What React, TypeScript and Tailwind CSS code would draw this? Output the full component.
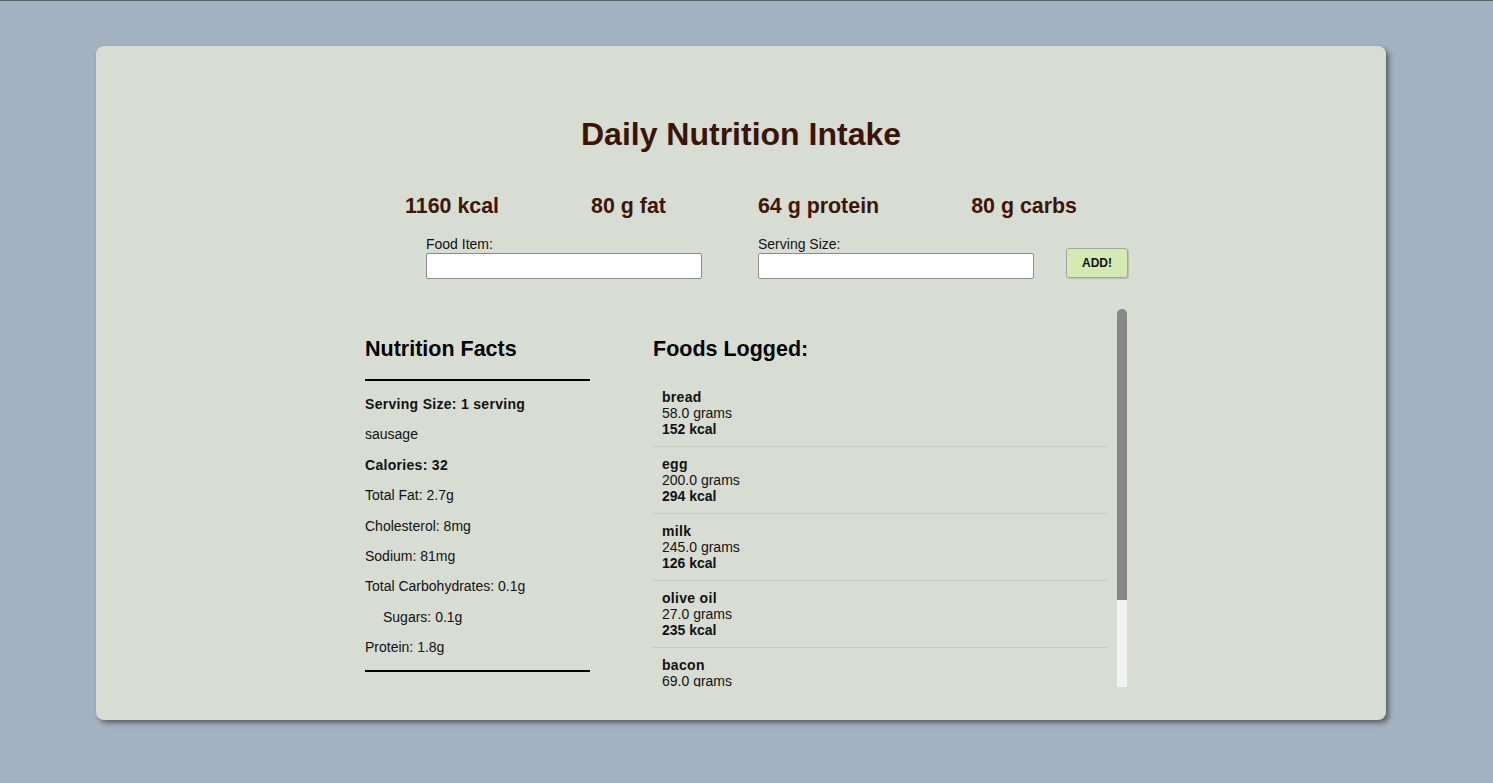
import React from "react";

const foods = [
  { name: "bread", grams: "58.0 grams", kcal: "152 kcal" },
  { name: "egg", grams: "200.0 grams", kcal: "294 kcal" },
  { name: "milk", grams: "245.0 grams", kcal: "126 kcal" },
  { name: "olive oil", grams: "27.0 grams", kcal: "235 kcal" },
  { name: "bacon", grams: "69.0 grams", kcal: "353 kcal" },
];

export default function App() {
  return (
    <div
      className="min-h-[783px] bg-[#a2b2c3] border-t border-[#5f5f5f] pt-[45px]"
      style={{ fontFamily: '"Liberation Sans", Arial, sans-serif' }}
    >
      <div className="ml-[96px] w-[1290px] h-[674px] bg-[#d8ddd3] rounded-[8px] shadow-[3px_3px_5px_rgba(70,70,70,0.75)] pt-[70px]">
        <h1 className="text-center text-[32px] leading-[37px] font-bold text-[#3b1402]">
          Daily Nutrition Intake
        </h1>

        <div className="mt-[41px] flex justify-center gap-[92px] text-[21.4px] leading-[24px] font-bold text-[#3f1503]">
          <span>1160 kcal</span>
          <span>80 g fat</span>
          <span>64 g protein</span>
          <span>80 g carbs</span>
        </div>

        <div className="mt-[18px] pl-[330px] flex items-end">
          <div className="flex flex-col w-[276px]">
            <label className="text-[14px] leading-[17px] text-[#111]">Food Item:</label>
            <input className="h-[26px] bg-white border border-[#8a8a8a] rounded-[2px]" />
          </div>
          <div className="flex flex-col w-[276px] ml-[56px]">
            <label className="text-[14px] leading-[17px] text-[#111]">Serving Size:</label>
            <input className="h-[26px] bg-white border border-[#8a8a8a] rounded-[2px]" />
          </div>
          <button className="ml-[32px] mb-[1px] w-[62px] h-[30px] bg-[#d4eab2] border border-[#a3a89d] rounded-[3px] text-[12px] font-bold text-[#111] shadow-[1px_1px_1px_rgba(0,0,0,0.15)]">
            ADD!
          </button>
        </div>

        <div className="mt-[30px] pl-[269px] flex">
          <div className="w-[225px] pt-[27.5px] text-[#111]">
            <h2 className="text-[21.5px] leading-[25px] font-bold text-black">Nutrition Facts</h2>
            <div className="mt-[17.5px] h-[2px] bg-black" />
            <div className="mt-[15px] flex flex-col gap-[14.4px] text-[14px] leading-[16px]">
              <p className="font-bold tracking-[0.3px]">Serving Size: 1 serving</p>
              <p>sausage</p>
              <p className="font-bold tracking-[0.3px]">Calories: 32</p>
              <p>Total Fat: 2.7g</p>
              <p>Cholesterol: 8mg</p>
              <p>Sodium: 81mg</p>
              <p>Total Carbohydrates: 0.1g</p>
              <p className="pl-[18px]">Sugars: 0.1g</p>
              <p>Protein: 1.8g</p>
            </div>
            <div className="mt-[14.5px] h-[2px] bg-black" />
          </div>

          <div className="ml-[63px] w-[474px] h-[378px] flex">
            <div className="w-[464px] h-full overflow-hidden">
              <div className="pr-[9px] pt-[27.5px]">
                <h2 className="text-[21.5px] leading-[25px] font-bold text-black">Foods Logged:</h2>
                <ul className="mt-[18.5px]">
                  {foods.map((f) => (
                    <li
                      key={f.name}
                      className="pl-[9px] pt-[9px] pb-[9px] border-b border-[#c6c9c4] text-[14px] leading-[16px] text-[#111]"
                    >
                      <div className="font-bold tracking-[0.3px]">{f.name}</div>
                      <div>{f.grams}</div>
                      <div className="font-bold">{f.kcal}</div>
                    </li>
                  ))}
                </ul>
              </div>
            </div>
            <div className="w-[10px] h-full flex flex-col">
              <div className="h-[296px] bg-[#888888] rounded-[5px]" />
              <div className="flex-1 bg-[#f1f1f1] -mt-[5px]" />
            </div>
          </div>
        </div>
      </div>
    </div>
  );
}
